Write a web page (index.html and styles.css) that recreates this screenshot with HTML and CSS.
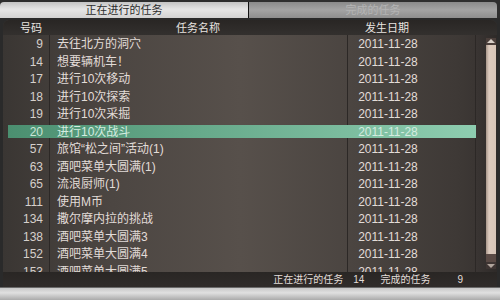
FILE: index.html
```html
<!DOCTYPE html>
<html lang="zh-CN">
<head>
    <meta charset="UTF-8">
    <title>任务</title>
    <link rel="stylesheet" href="styles.css">
</head>
<body>
    <div class="screen">
        <div class="tabs">
            <div class="tab active">正在进行的任务</div>
            <div class="tab">完成的任务</div>
        </div>
        <div class="panel">
            <div class="head">
                <span class="c-num">号码</span>
                <span class="c-name">任务名称</span>
                <span class="c-date">发生日期</span>
            </div>
            <div class="body">
                <div class="list">
                    <div class="row"><span class="c-num">9</span><span class="c-name">去往北方的洞穴</span><span class="c-date">2011-11-28</span></div>
                    <div class="row"><span class="c-num">14</span><span class="c-name">想要辆机车！</span><span class="c-date">2011-11-28</span></div>
                    <div class="row"><span class="c-num">17</span><span class="c-name">进行10次移动</span><span class="c-date">2011-11-28</span></div>
                    <div class="row"><span class="c-num">18</span><span class="c-name">进行10次探索</span><span class="c-date">2011-11-28</span></div>
                    <div class="row"><span class="c-num">19</span><span class="c-name">进行10次采掘</span><span class="c-date">2011-11-28</span></div>
                    <div class="row sel"><span class="c-num">20</span><span class="c-name">进行10次战斗</span><span class="c-date">2011-11-28</span></div>
                    <div class="row"><span class="c-num">57</span><span class="c-name">旅馆“松之间”活动(1)</span><span class="c-date">2011-11-28</span></div>
                    <div class="row"><span class="c-num">63</span><span class="c-name">酒吧菜单大圆满(1)</span><span class="c-date">2011-11-28</span></div>
                    <div class="row"><span class="c-num">65</span><span class="c-name">流浪厨师(1)</span><span class="c-date">2011-11-28</span></div>
                    <div class="row"><span class="c-num">111</span><span class="c-name">使用M币</span><span class="c-date">2011-11-28</span></div>
                    <div class="row"><span class="c-num">134</span><span class="c-name">撒尔摩内拉的挑战</span><span class="c-date">2011-11-28</span></div>
                    <div class="row"><span class="c-num">138</span><span class="c-name">酒吧菜单大圆满3</span><span class="c-date">2011-11-28</span></div>
                    <div class="row"><span class="c-num">152</span><span class="c-name">酒吧菜单大圆满4</span><span class="c-date">2011-11-28</span></div>
                    <div class="row"><span class="c-num">153</span><span class="c-name">酒吧菜单大圆满5</span><span class="c-date">2011-11-28</span></div>
                </div>
                <div class="scroll">
                    <div class="arrow up"></div>
                    <div class="track"></div>
                    <div class="arrow down"></div>
                </div>
            </div>
            <div class="footer">
                <span>正在进行的任务</span>
                <span class="count">14</span>
                <span class="label">完成的任务</span>
                <span class="count last">9</span>
            </div>
        </div>
        <div class="base"></div>
    </div>
</body>
</html>
```

FILE: styles.css
```css
body {
    margin: 0;
    background: #2a2a2a;
    font-family: "Liberation Sans", "Noto Sans CJK SC", sans-serif;
}
.screen {
    width: 500px;
    height: 300px;
    display: flex;
    flex-direction: column;
    overflow: hidden;
}
.tabs {
    display: flex;
    height: 16px;
    padding-top: 2px;
    background: #2e2e2e;
    flex-shrink: 0;
}
.tab {
    flex: 1;
    font-size: 11px;
    line-height: 16px;
    text-align: center;
    color: #b4b4b4;
    background: linear-gradient(#8a8a8a, #a4a4a4 50%, #8e8e8e);
    border-radius: 0 4px 0 0;
    margin-right: 3px;
}
.tab.active {
    color: #2c2c2c;
    background: linear-gradient(#c4c4c4, #e6e6e6 45%, #d2d2d2);
    border-radius: 4px 0 0 0;
    margin-right: 0;
    border-right: 1px solid #111;
}
.panel {
    flex: 1;
    margin: 2px 3px 0 3px;
    display: flex;
    flex-direction: column;
    border-radius: 6px 6px 0 0;
    overflow: hidden;
    background: linear-gradient(to right, #3a3633, #4c4642 22%, #57504b 48%, #4b4541 70%, #3e3936 92%, #36312f);
    color: #e2dcd8;
}
.head {
    height: 15px;
    display: grid;
    grid-template-columns: 46px 298px 80px 1fr;
    font-size: 11px;
    line-height: 16px;
    background: linear-gradient(#292624, #33302e);
    color: #e8e4e0;
}
.head .c-num {
    text-align: right;
    padding-right: 7px;
}
.head .c-name,
.head .c-date {
    text-align: center;
}
.body {
    flex: 1;
    display: flex;
    overflow: hidden;
}
.list {
    flex: 1;
    overflow: hidden;
    background:
        linear-gradient(to right, transparent 46px, #2c2826 46px, #2c2826 47px, transparent 47px),
        linear-gradient(to right, transparent 344px, #2c2826 344px, #2c2826 345px, transparent 345px),
        linear-gradient(to right, transparent 472px, #2c2826 472px, #2c2826 473px, transparent 473px);
}
.row {
    display: grid;
    grid-template-columns: 46px 298px 80px 1fr;
    height: 17.5px;
    font-size: 12px;
    line-height: 18px;
    white-space: nowrap;
}
.row .c-num {
    text-align: right;
    padding-right: 6px;
    color: #d6d0cc;
}
.row .c-name {
    padding-left: 8px;
}
.row .c-date {
    text-align: center;
    padding-left: 2px;
}
.row.sel {
    margin: 2px 0 2px 5px;
    height: 13.5px;
    line-height: 14px;
    grid-template-columns: 41px 298px 80px 1fr;
    background: linear-gradient(to right, #4b8f70, #66a98a 40%, #8ecdb0);
    color: #d4ece0;
}
.row.sel .c-num {
    color: #cce6d8;
}
.scroll {
    width: 21px;
    display: flex;
    flex-direction: column;
    align-items: flex-end;
    background: linear-gradient(to right, #3a3533, #2e2a28);
    padding: 3px 1px 3px 0;
    box-sizing: border-box;
}
.arrow {
    width: 10px;
    height: 7px;
    background: #4a3e3a;
    position: relative;
}
.arrow::after {
    content: "";
    position: absolute;
    left: 1px;
    border-left: 4px solid transparent;
    border-right: 4px solid transparent;
}
.arrow.up::after {
    top: 1px;
    border-bottom: 4px solid #d8cfc8;
}
.arrow.down {
    background: #3e3533;
}
.arrow.down::after {
    top: 2px;
    border-top: 4px solid #b0a49c;
}
.track {
    flex: 1;
    width: 10px;
    background: linear-gradient(to right, #a8968a, #dccabd 30%, #d6c4b7);
    border-bottom: 8px solid #5a4a45;
}
.footer {
    height: 15px;
    display: flex;
    justify-content: flex-end;
    font-size: 10px;
    line-height: 15px;
    background: linear-gradient(#292624, #302c2a);
    color: #e2ddd9;
    padding-right: 34px;
}
.footer .count {
    margin-left: 10px;
}
.footer .label {
    margin-left: 16px;
}
.footer .last {
    margin-left: 27px;
}
.base {
    height: 12px;
    flex-shrink: 0;
    border-top: 1px solid #6a6a6a;
    background: linear-gradient(#c8c8c8, #e0e0e0 40%, #aaaaaa);
}
```
